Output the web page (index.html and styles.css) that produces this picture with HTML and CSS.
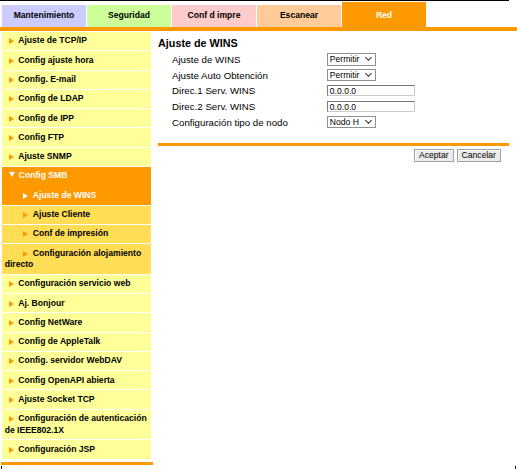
FILE: index.html
```html
<!DOCTYPE html>
<html lang="es">

<head>
  <meta charset="UTF-8">
  <title>Ajuste de WINS</title>
  <link rel="stylesheet" href="styles.css">
</head>

<body>
  <div class="page">
    <div class="topline"></div>
    <div class="tabs">
      <div class="tab tab-maint">Mantenimiento</div>
      <div class="tab tab-sec">Seguridad</div>
      <div class="tab tab-print">Conf d impre</div>
      <div class="tab tab-scan">Escanear</div>
      <div class="tab tab-net">Red</div>
    </div>
    <div class="tabline"></div>

    <div class="main">
      <div class="menu">
        <div class="menu-item"><span class="arrow"></span>Ajuste de TCP/IP</div>
        <div class="menu-item"><span class="arrow"></span>Config ajuste hora</div>
        <div class="menu-item"><span class="arrow"></span>Config. E-mail</div>
        <div class="menu-item"><span class="arrow"></span>Config de LDAP</div>
        <div class="menu-item"><span class="arrow"></span>Config de IPP</div>
        <div class="menu-item"><span class="arrow"></span>Config FTP</div>
        <div class="menu-item"><span class="arrow"></span>Ajuste SNMP</div>
        <div class="menu-item open"><span class="arrow-down"></span>Config SMB</div>
        <div class="menu-item sub current"><span class="arrow"></span>Ajuste de WINS</div>
        <div class="menu-item sub"><span class="arrow"></span>Ajuste Cliente</div>
        <div class="menu-item sub"><span class="arrow"></span>Conf de impresión</div>
        <div class="menu-item sub"><span class="arrow"></span>Configuración alojamiento directo</div>
        <div class="menu-item"><span class="arrow"></span>Configuración servicio web</div>
        <div class="menu-item"><span class="arrow"></span>Aj. Bonjour</div>
        <div class="menu-item"><span class="arrow"></span>Config NetWare</div>
        <div class="menu-item"><span class="arrow"></span>Config de AppleTalk</div>
        <div class="menu-item"><span class="arrow"></span>Config. servidor WebDAV</div>
        <div class="menu-item"><span class="arrow"></span>Config OpenAPI abierta</div>
        <div class="menu-item"><span class="arrow"></span>Ajuste Socket TCP</div>
        <div class="menu-item"><span class="arrow"></span>Configuración de autenticación de IEEE802.1X</div>
        <div class="menu-item"><span class="arrow"></span>Configuración JSP</div>
        <div class="menu-end"></div>
      </div>

      <div class="content">
        <h1>Ajuste de WINS</h1>
        <div class="form">
          <label>Ajuste de WINS</label>
          <span class="select"><select><option>Permitir</option><option>Restringir</option></select></span>

          <label>Ajuste Auto Obtención</label>
          <span class="select"><select><option>Permitir</option><option>Restringir</option></select></span>

          <label>Direc.1 Serv. WINS</label>
          <input class="text" type="text" value="0.0.0.0" />

          <label>Direc.2 Serv. WINS</label>
          <input class="text" type="text" value="0.0.0.0" />

          <label>Configuración tipo de nodo</label>
          <span class="select"><select><option>Nodo H</option><option>Nodo B</option><option>Nodo P</option><option>Nodo M</option></select></span>
        </div>
        <div class="rule"></div>
        <div class="buttons">
          <button>Aceptar</button>
          <button>Cancelar</button>
        </div>
      </div>
    </div>

    <div class="bottom"></div>
  </div>
</body>

</html>
```

FILE: styles.css
```css
body {
  margin: 0;
  font-family: "Liberation Sans", Arial, sans-serif;
  color: #000;
  background: #fff;
}

.page {
  width: 517px;
}

.topline {
  width: 509px;
  height: 1px;
  background: #000;
}

/* pestañas */
.tabs {
  display: flex;
  align-items: flex-end;
  gap: 1px;
  height: 26px;
  padding-left: 2px;
}

.tab {
  width: 84px;
  height: 22px;
  line-height: 20px;
  text-align: center;
  font-size: 8.6px;
  font-weight: bold;
}

.tab-maint {
  background: #ccccff;
}

.tab-sec {
  background: #ccff99;
}

.tab-print {
  background: #ffcccc;
}

.tab-scan {
  background: #ffcc99;
}

.tab-net {
  box-sizing: border-box;
  height: 25px;
  padding-top: 3px;
  background: #ff9900;
  color: #fff;
}

.tabline {
  height: 4px;
  background: #ff9900;
}

.main {
  display: flex;
  align-items: flex-start;
  padding-left: 2px;
}

/* menú lateral */
.menu {
  width: 149px;
  padding-top: 1px;
}

.menu-item {
  padding: 3.45px 2px 3.45px 2.7px;
  border-bottom: 1px solid #fff;
  background: #ffff99;
  font-size: 8.6px;
  line-height: 11.4px;
  font-weight: bold;
}

.menu-item .arrow {
  display: inline-block;
  width: 0;
  height: 0;
  margin: 0 4.5px 0 4px;
  border-left: 5px solid #ff9900;
  border-top: 3px solid transparent;
  border-bottom: 3px solid transparent;
  vertical-align: -1px;
}

.menu-item .arrow-down {
  display: inline-block;
  width: 0;
  height: 0;
  margin: 0 4px 0 4px;
  border-top: 5px solid #fff;
  border-left: 3px solid transparent;
  border-right: 3px solid transparent;
  vertical-align: 1px;
}

.menu-item.open {
  background: #ff9900;
  border-bottom-color: #ff9900;
  color: #fff;
}

.menu-item.sub {
  background: #ffdd55;
}

.menu-item.sub .arrow {
  margin-left: 18.6px;
}

.menu-item.current {
  background: #ff9900;
  color: #fff;
}

.menu-item.current .arrow {
  border-left-color: #fff;
}

.menu-end {
  height: 3px;
  margin: 2px -2px 0 -1px;
  background: #ff9900;
}

/* contenido */
.content {
  width: 351px;
  margin-left: 7px;
}

.content h1 {
  margin: 6px 0 0;
  font-size: 10.8px;
  line-height: 13px;
  font-weight: bold;
}

.form {
  display: grid;
  grid-template-columns: 155.3px auto;
  grid-auto-rows: 12.3px;
  row-gap: 3.4px;
  align-items: center;
  margin: 3.3px 0 0 14px;
  font-size: 9.7px;
}

.select {
  position: relative;
  display: block;
  box-sizing: border-box;
  width: 48.7px;
  height: 12.3px;
  border: 1px solid #8f8f8f;
  background: #fff;
}

.select select {
  display: block;
  width: 100%;
  height: 100%;
  margin: 0;
  padding: 0 0 0 1.5px;
  border: 0;
  background: transparent;
  font-family: "Liberation Sans", Arial, sans-serif;
  font-size: 8.6px;
  color: #000;
  appearance: none;
  -webkit-appearance: none;
  outline: none;
}

.select::after {
  content: "";
  position: absolute;
  right: 4px;
  top: 1.2px;
  width: 4px;
  height: 4px;
  border-right: 1.3px solid #333;
  border-bottom: 1.3px solid #333;
  transform: rotate(45deg);
  pointer-events: none;
}

.text {
  box-sizing: border-box;
  width: 87.7px;
  height: 11px;
  margin: 0;
  padding: 0 0 0 1.5px;
  border: 1px solid;
  border-color: #777 #ccc #ccc #777;
  font-family: "Liberation Sans", Arial, sans-serif;
  font-size: 8.6px;
  color: #000;
  outline: none;
}

.rule {
  height: 3px;
  margin-top: 14.7px;
  background: #ff9900;
}

.buttons {
  display: flex;
  justify-content: flex-end;
  gap: 3px;
  margin: 3px 8px 0 0;
}

.buttons button {
  height: 13px;
  margin: 0;
  padding: 0 4px;
  border: 1px solid #a0a0a0;
  background: #ececec;
  box-shadow: inset 1px 1px #fff;
  font-family: "Liberation Sans", Arial, sans-serif;
  font-size: 8.6px;
  line-height: 11px;
  color: #000;
}

.bottom {
  height: 3px;
  margin: 1px 1px 0 1px;
  border: 1px solid #000;
  border-top: 0;
}
```
